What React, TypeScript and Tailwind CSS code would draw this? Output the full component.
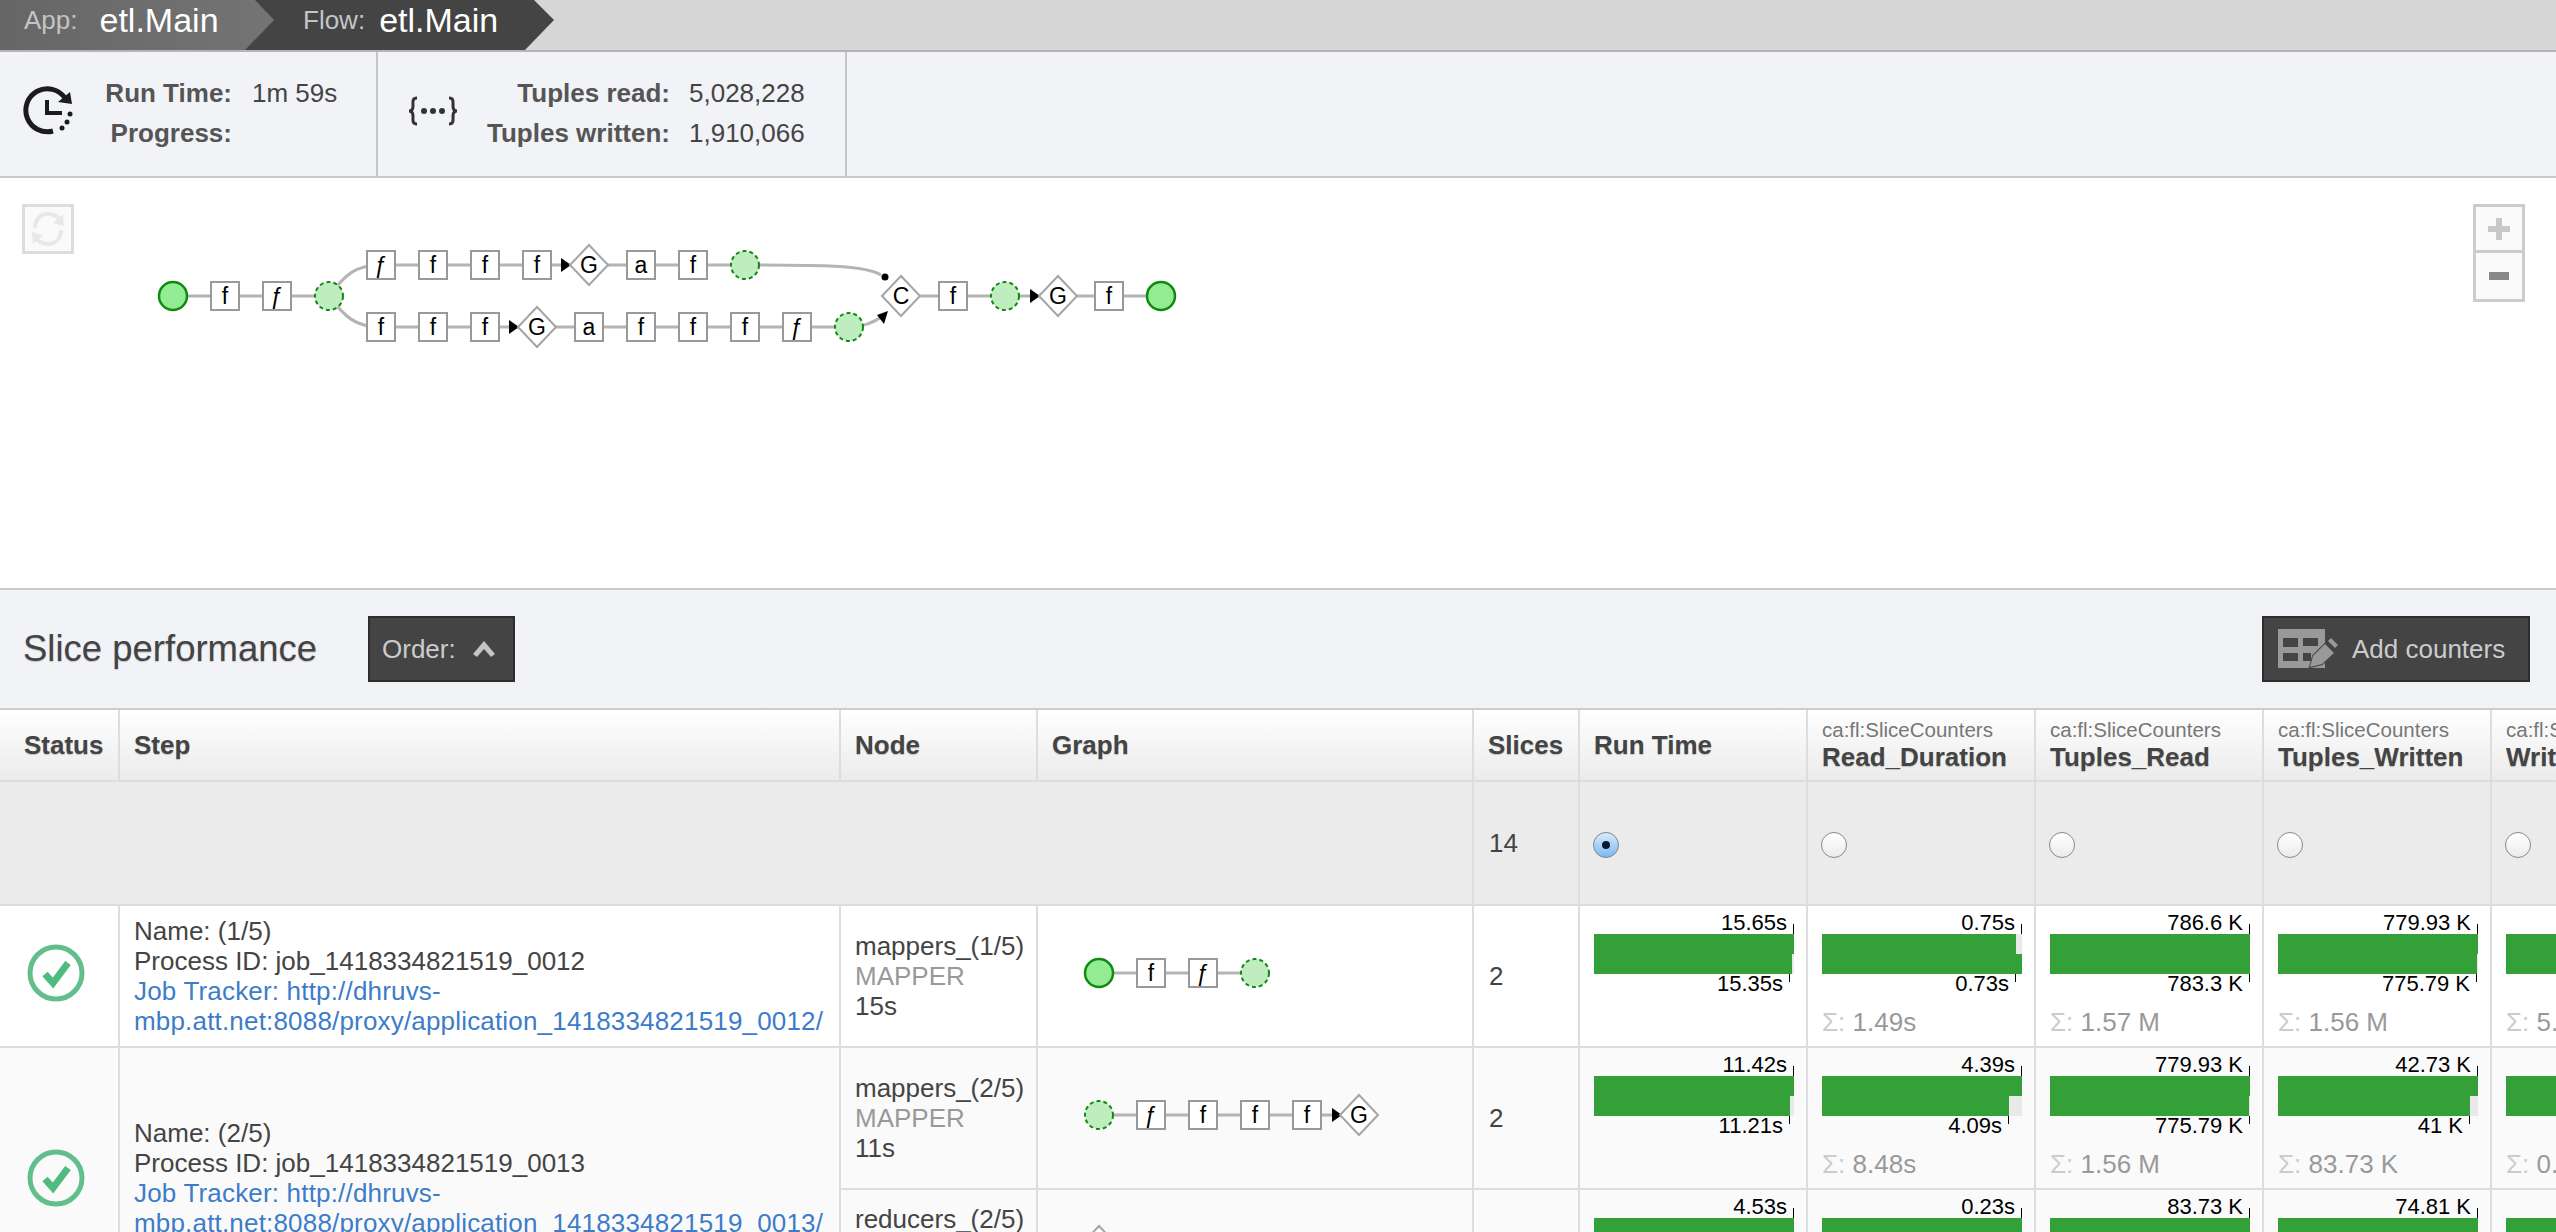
import React from 'react';

const LINE = '#b4b4b4';

function Box({ x, y, label }: { x: number; y: number; label: string }) {
  return (
    <g>
      <rect x={x - 14} y={y - 14} width={28} height={28} fill="#fff" stroke="#999" strokeWidth={2} />
      <text x={x} y={y + 8} textAnchor="middle" fontSize={23} fill="#000">{label}</text>
    </g>
  );
}

function Diamond({ x, y, label }: { x: number; y: number; label: string }) {
  return (
    <g>
      <polygon points={`${x - 19},${y} ${x},${y - 20} ${x + 19},${y} ${x},${y + 20}`} fill="#fff" stroke="#a5a5a5" strokeWidth={2} />
      <text x={x} y={y + 8} textAnchor="middle" fontSize={23} fill="#000">{label}</text>
    </g>
  );
}

function Dot({ x, y, dashed }: { x: number; y: number; dashed?: boolean }) {
  return dashed ? (
    <circle cx={x} cy={y} r={14} fill="#c0edc0" stroke="#108a10" strokeWidth={2} strokeDasharray="4 3" />
  ) : (
    <circle cx={x} cy={y} r={14} fill="#93ec93" stroke="#108a10" strokeWidth={2.5} />
  );
}

function Arrow({ x, y }: { x: number; y: number }) {
  return <polygon points={`${x - 8},${y - 7} ${x + 2},${y} ${x - 8},${y + 7}`} fill="#000" />;
}

function FlowGraph() {
  return (
    <svg width={1200} height={200} viewBox="0 178 1200 200" className="block" style={{ fontFamily: 'Liberation Sans, sans-serif' }}>
      <g fill="none" stroke={LINE} strokeWidth={3}>
        <path d="M173 296H329" />
        <path d="M901 296H1161" />
        <path d="M329 296C345 275 355 265 381 265H745C820 265 865 265 881 275" />
        <path d="M329 296C345 317 355 327 381 327H849C865 327 875 322 884 315" />
      </g>
      <Dot x={173} y={296} />
      <Box x={225} y={296} label="f" />
      <Box x={277} y={296} label="ƒ" />
      <Dot x={329} y={296} dashed />
      <Box x={381} y={265} label="ƒ" />
      <Box x={433} y={265} label="f" />
      <Box x={485} y={265} label="f" />
      <Box x={537} y={265} label="f" />
      <Arrow x={569} y={265} />
      <Diamond x={589} y={265} label="G" />
      <Box x={641} y={265} label="a" />
      <Box x={693} y={265} label="f" />
      <Dot x={745} y={265} dashed />
      <Box x={381} y={327} label="f" />
      <Box x={433} y={327} label="f" />
      <Box x={485} y={327} label="f" />
      <Arrow x={517} y={327} />
      <Diamond x={537} y={327} label="G" />
      <Box x={589} y={327} label="a" />
      <Box x={641} y={327} label="f" />
      <Box x={693} y={327} label="f" />
      <Box x={745} y={327} label="f" />
      <Box x={797} y={327} label="ƒ" />
      <Dot x={849} y={327} dashed />
      <circle cx={885} cy={277} r={3.5} fill="#000" />
      <polygon points="888,311 884,324 877,315" fill="#000" />
      <Diamond x={901} y={296} label="C" />
      <Box x={953} y={296} label="f" />
      <Dot x={1005} y={296} dashed />
      <Arrow x={1038} y={296} />
      <Diamond x={1058} y={296} label="G" />
      <Box x={1109} y={296} label="f" />
      <Dot x={1161} y={296} />
    </svg>
  );
}

function MiniGraph({ children }: { children: React.ReactNode }) {
  return (
    <svg width={434} height={60} viewBox="1038 -30 434 60" className="block" style={{ fontFamily: 'Liberation Sans, sans-serif' }}>
      {children}
    </svg>
  );
}

function ClockIcon() {
  return (
    <svg width={52} height={52} viewBox="0 0 52 52" fill="none" stroke="#1c1c1c" strokeWidth={5} className="shrink-0 mb-1">
      <path d="M43 13A21.5 21.5 0 1 0 31 46" />
      <polygon points="48,7 50,19 36,17" fill="#1c1c1c" stroke="none" />
      <path d="M25 15V28H40" strokeWidth={4} />
      <circle cx={40} cy={43} r={2.5} fill="#1c1c1c" stroke="none" />
      <circle cx={45} cy={37} r={2.5} fill="#1c1c1c" stroke="none" />
      <circle cx={48} cy={29} r={2.5} fill="#1c1c1c" stroke="none" />
    </svg>
  );
}

function BracesIcon() {
  return (
    <svg width={50} height={30} viewBox="0 0 50 30" fill="none" stroke="#333" strokeWidth={3} className="shrink-0 mb-1">
      <path d="M9 2C4 2 5 6 5 10C5 13 4 15 1 15C4 15 5 17 5 20C5 24 4 28 9 28" />
      <path d="M41 2C46 2 45 6 45 10C45 13 46 15 49 15C46 15 45 17 45 20C45 24 46 28 41 28" />
      <circle cx={16} cy={15} r={3} fill="#333" stroke="none" />
      <circle cx={25} cy={15} r={3} fill="#333" stroke="none" />
      <circle cx={34} cy={15} r={3} fill="#333" stroke="none" />
    </svg>
  );
}

function CheckIcon() {
  return (
    <svg width={58} height={58} viewBox="0 0 58 58" fill="none">
      <circle cx={29} cy={29} r={26} stroke="#62bf8c" strokeWidth={5} />
      <path d="M18 30L26 39L41 19" stroke="#4fbb80" strokeWidth={7} />
    </svg>
  );
}

function TableEditIcon() {
  return (
    <svg width={62} height={40} viewBox="0 0 62 40" className="shrink-0">
      <path
        d="M0 0H47V39H0Z M5 9V18H20V9Z M25 9V17H40V9Z M5 24V32H20V24Z M25 24V32H33V24Z"
        fill="#999999"
        fillRule="evenodd"
      />
      <path d="M32 38L35 27L47 15L56 24L44 35Z" fill="#999999" stroke="#444444" strokeWidth={2} paintOrder="stroke" />
      <path d="M50 12L53 9L60 16L57 19Z" fill="#999999" />
    </svg>
  );
}

function Radio({ on }: { on?: boolean }) {
  return on ? (
    <div className="w-[26px] h-[26px] rounded-full border border-[#7c8794] bg-gradient-to-b from-[#dbeafb] to-[#7db8f0] flex items-center justify-center mt-1">
      <div className="w-2 h-2 rounded-full bg-[#0b1a33]" />
    </div>
  ) : (
    <div className="w-[26px] h-[26px] rounded-full border border-[#8a8a8a] bg-gradient-to-b from-white to-[#ececec] mt-1" />
  );
}

type Metric = {
  top: string;
  bottom: string;
  topBar: number;
  botBar: number;
  topTick: number;
  botTick: number;
  sum?: string;
};

function MetricCell({ m, bg }: { m: Metric; bg: string }) {
  return (
    <div className={`${bg} border-r-2 border-b-2 border-[#dddddd] pl-[14px] pt-2 overflow-hidden`}>
      <div className="w-[200px]">
        <div className="h-5 flex justify-end items-end text-[22px] leading-[22px] text-black" style={{ width: `${m.topTick}%` }}>
          <span className="whitespace-nowrap mr-[6px]">{m.top}</span>
          <div className="w-px h-[10px] shrink-0 bg-black" />
        </div>
        <div className="bg-[#e9e9e9]">
          <div className="h-5 bg-[#34a038]" style={{ width: `${m.topBar}%` }} />
          <div className="h-5 bg-[#34a038]" style={{ width: `${m.botBar}%` }} />
        </div>
        <div className="h-5 flex justify-end items-start text-[22px] leading-5 text-black" style={{ width: `${m.botTick}%` }}>
          <span className="whitespace-nowrap mr-[6px]">{m.bottom}</span>
          <div className="w-px h-2 shrink-0 bg-black" />
        </div>
      </div>
      {m.sum && (
        <div className="mt-[14px] text-[26px] leading-[28px] text-[#999999] whitespace-nowrap">
          <span className="text-[#cccccc]">Σ: </span>{m.sum}
        </div>
      )}
    </div>
  );
}

function HeaderCell({ title, sub, first }: { title: string; sub?: string; first?: boolean }) {
  return (
    <div className={`bg-gradient-to-b from-white to-[#ebebeb] border-r-2 border-b-2 border-[#dddddd] ${first ? 'pl-6' : 'pl-[14px]'} flex flex-col justify-center overflow-hidden whitespace-nowrap`}>
      {sub && <div className="text-[20.5px] leading-6 text-[#777777]">{sub}</div>}
      <div className="text-[26px] leading-[30px] font-bold text-[#444444] [text-shadow:0_1px_1px_rgba(0,0,0,0.2)]">{title}</div>
    </div>
  );
}

function StepCell({ n, id, bg, span }: { n: string; id: string; bg: string; span?: boolean }) {
  return (
    <div className={`${bg} ${span ? 'row-span-2' : ''} border-r-2 border-b-2 border-[#dddddd] pl-[14px] flex flex-col justify-center text-[26px] leading-[30px] text-[#444444]`}>
      <div>Name: ({n})</div>
      <div>Process ID: job_1418334821519_{id}</div>
      <div className="text-[#3d7cc9] tracking-[0.18px]">Job Tracker: http://dhruvs-mbp.att.net:8088/proxy/application_1418334821519_{id}/</div>
    </div>
  );
}

function NodeCell({ name, kind, time, bg }: { name: string; kind: string; time: string; bg: string }) {
  return (
    <div className={`${bg} border-r-2 border-b-2 border-[#dddddd] pl-[14px] flex flex-col justify-center text-[26px] leading-[30px] text-[#444444] whitespace-nowrap`}>
      <div>{name}</div>
      <div className="text-[#999999]">{kind}</div>
      <div>{time}</div>
    </div>
  );
}

const blank: Metric = { top: '', bottom: '', topBar: 100, botBar: 100, topTick: 100, botTick: 100 };

const rowOne: Metric[] = [
  { top: '15.65s', bottom: '15.35s', topBar: 100, botBar: 99, topTick: 100, botTick: 98 },
  { top: '0.75s', bottom: '0.73s', topBar: 97, botBar: 100, topTick: 100, botTick: 97, sum: '1.49s' },
  { top: '786.6 K', bottom: '783.3 K', topBar: 100, botBar: 100, topTick: 100, botTick: 100, sum: '1.57 M' },
  { top: '779.93 K', bottom: '775.79 K', topBar: 100, botBar: 99.5, topTick: 100, botTick: 99.5, sum: '1.56 M' },
  { ...blank, sum: '5.52s' },
];

const rowTwo: Metric[] = [
  { top: '11.42s', bottom: '11.21s', topBar: 100, botBar: 98, topTick: 100, botTick: 98 },
  { top: '4.39s', bottom: '4.09s', topBar: 100, botBar: 93.5, topTick: 100, botTick: 93.5, sum: '8.48s' },
  { top: '779.93 K', bottom: '775.79 K', topBar: 100, botBar: 99.5, topTick: 100, botTick: 100, sum: '1.56 M' },
  { top: '42.73 K', bottom: '41 K', topBar: 100, botBar: 96, topTick: 100, botTick: 96, sum: '83.73 K' },
  { ...blank, sum: '0.52s' },
];

const rowThree: Metric[] = [
  { ...blank, top: '4.53s' },
  { ...blank, top: '0.23s' },
  { ...blank, top: '83.73 K' },
  { ...blank, top: '74.81 K' },
  blank,
];

export default function App() {
  return (
    <div className="w-[2556px] h-[1232px] overflow-hidden bg-white [font-family:'Liberation_Sans',sans-serif]">
      {/* Breadcrumb */}
      <div className="h-[52px] bg-[#d6d6d6] border-b-2 border-[#b5b5b5] flex">
        <div className="relative z-10 w-[274px] h-[50px] pl-6 pb-[10px] flex items-center gap-[22px] bg-gradient-to-r from-[#666666] to-[#747474] [clip-path:polygon(0_0,255px_0,274px_20px,245px_50px,0_50px)]">
          <span className="text-[26px] text-[#c4c4c4]">App:</span>
          <span className="text-[34px] text-white">etl.Main</span>
        </div>
        <div className="-ml-[29px] w-[309px] h-[50px] pl-[58px] pb-[10px] flex items-center gap-[14px] bg-[#444444] [clip-path:polygon(0_0,289px_0,309px_20px,280px_50px,0_50px)]">
          <span className="text-[26px] text-[#c4c4c4]">Flow:</span>
          <span className="text-[34px] text-white">etl.Main</span>
        </div>
      </div>

      {/* Stats */}
      <div className="h-[126px] bg-[#f1f3f7] border-b-2 border-[#c8c8c8] flex text-[26px] leading-10">
        <div className="w-[378px] border-r-2 border-[#c4c4c4] flex items-center pl-[22px] pb-[2px]">
          <ClockIcon />
          <div className="grid grid-cols-[158px_auto] gap-x-[20px] justify-start">
            <div className="text-right font-bold text-[#555555]">Run Time:</div>
            <div className="text-[#444444]">1m 59s</div>
            <div className="text-right font-bold text-[#555555]">Progress:</div>
            <div />
          </div>
        </div>
        <div className="w-[469px] border-r-2 border-[#c4c4c4] flex items-center pl-[30px] pb-[2px]">
          <BracesIcon />
          <div className="grid grid-cols-[212px_auto] gap-x-[19px] justify-start">
            <div className="text-right font-bold text-[#555555]">Tuples read:</div>
            <div className="text-[#444444]">5,028,228</div>
            <div className="text-right font-bold text-[#555555]">Tuples written:</div>
            <div className="text-[#444444]">1,910,066</div>
          </div>
        </div>
      </div>

      {/* Flow graph */}
      <div className="relative h-[412px] border-b-2 border-[#cccccc]">
        <FlowGraph />
        <div className="absolute left-[22px] top-[26px] w-[52px] h-[50px] border-[3px] border-[#dddddd] bg-[#fafafa] flex items-center justify-center">
          <svg width={36} height={40} viewBox="0 0 36 40" fill="none" stroke="#e8e8e8" strokeWidth={4}>
            <path d="M5 19C5 10 11 5 18 5C24 5 29 8 31 13" />
            <path d="M31 21C31 30 25 35 18 35C12 35 7 32 5 27" />
            <polygon points="33,5 34,17 23,14" fill="#e8e8e8" stroke="none" />
            <polygon points="3,35 2,23 13,26" fill="#e8e8e8" stroke="none" />
          </svg>
        </div>
        <div className="absolute left-[2473px] top-[26px] w-[52px] border-[3px] border-[#cccccc] bg-[#fafafa]">
          <div className="h-[46px] border-b-[3px] border-[#cccccc] flex items-center justify-center">
            <svg width={24} height={24} viewBox="0 0 24 24" fill="#c8c8c8">
              <path d="M9 1H15V9H23V15H15V23H9V15H1V9H9Z" />
            </svg>
          </div>
          <div className="h-[46px] flex items-center justify-center">
            <svg width={20} height={8} viewBox="0 0 20 8" fill="#888888">
              <rect width={20} height={8} />
            </svg>
          </div>
        </div>
      </div>

      {/* Slice performance */}
      <div className="h-[120px] bg-[#f1f3f7] border-b-2 border-[#cccccc] flex items-center pl-[23px] pr-[26px]">
        <div className="w-[345px] text-[36.5px] text-[#444444] [text-shadow:0_1px_1px_rgba(0,0,0,0.2)]">Slice performance</div>
        <div className="w-[147px] h-[66px] bg-[#444444] border-2 border-[#2d2d2d] flex items-center pl-[12px] gap-[16px]">
          <span className="text-[26px] text-[#cccccc]">Order:</span>
          <svg width={24} height={18} viewBox="0 0 24 18" fill="#c4c4c4">
            <path d="M12 1L23 14L19 17L12 9L5 17L1 14Z" />
          </svg>
        </div>
        <div className="ml-auto w-[268px] h-[66px] bg-[#444444] border-2 border-[#2d2d2d] flex items-center pl-[14px] gap-[12px]">
          <TableEditIcon />
          <span className="text-[26px] text-[#cccccc] whitespace-nowrap">Add counters</span>
        </div>
      </div>

      {/* Steps table */}
      <div className="grid grid-cols-[120px_721px_197px_436px_106px_228px_228px_228px_228px_228px] grid-rows-[72px_124px_142px_142px_120px]">
        <HeaderCell title="Status" first />
        <HeaderCell title="Step" />
        <HeaderCell title="Node" />
        <HeaderCell title="Graph" />
        <HeaderCell title="Slices" />
        <HeaderCell title="Run Time" />
        <HeaderCell title="Read_Duration" sub="ca:fl:SliceCounters" />
        <HeaderCell title="Tuples_Read" sub="ca:fl:SliceCounters" />
        <HeaderCell title="Tuples_Written" sub="ca:fl:SliceCounters" />
        <HeaderCell title="Write_Duration" sub="ca:fl:SliceCounters" />

        {/* Totals */}
        <div className="col-span-4 bg-[#ebebeb] border-r-2 border-b-2 border-[#dddddd]" />
        <div className="bg-[#ebebeb] border-r-2 border-b-2 border-[#dddddd] pl-[15px] flex items-center text-[26px] text-[#444444]">14</div>
        {[true, false, false, false, false].map((on, i) => (
          <div key={i} className="bg-[#ebebeb] border-r-2 border-b-2 border-[#dddddd] pl-[13px] flex items-center">
            <Radio on={on} />
          </div>
        ))}

        {/* Step 1/5 */}
        <div className="bg-white border-r-2 border-b-2 border-[#dddddd] flex items-center justify-center pb-[6px] pr-[6px]">
          <CheckIcon />
        </div>
        <StepCell n="1/5" id="0012" bg="bg-white" />
        <NodeCell name="mappers_(1/5)" kind="MAPPER" time="15s" bg="bg-white" />
        <div className="bg-white border-r-2 border-b-2 border-[#dddddd] flex items-center pb-[6px]">
          <MiniGraph>
            <path d="M1099 0H1255" stroke={LINE} strokeWidth={3} />
            <Dot x={1099} y={0} />
            <Box x={1151} y={0} label="f" />
            <Box x={1203} y={0} label="ƒ" />
            <Dot x={1255} y={0} dashed />
          </MiniGraph>
        </div>
        <div className="bg-white border-r-2 border-b-2 border-[#dddddd] pl-[15px] flex items-center text-[26px] text-[#444444]">2</div>
        {rowOne.map((m, i) => (
          <MetricCell key={i} m={m} bg="bg-white" />
        ))}

        {/* Step 2/5 */}
        <div className="row-span-2 bg-[#fafafa] border-r-2 border-b-2 border-[#dddddd] flex items-center justify-center pr-[6px]">
          <CheckIcon />
        </div>
        <StepCell n="2/5" id="0013" bg="bg-[#fafafa]" span />
        <NodeCell name="mappers_(2/5)" kind="MAPPER" time="11s" bg="bg-[#fafafa]" />
        <div className="bg-[#fafafa] border-r-2 border-b-2 border-[#dddddd] flex items-center pb-[6px]">
          <MiniGraph>
            <path d="M1099 0H1340" stroke={LINE} strokeWidth={3} />
            <Dot x={1099} y={0} dashed />
            <Box x={1151} y={0} label="ƒ" />
            <Box x={1203} y={0} label="f" />
            <Box x={1255} y={0} label="f" />
            <Box x={1307} y={0} label="f" />
            <Arrow x={1340} y={0} />
            <Diamond x={1359} y={0} label="G" />
          </MiniGraph>
        </div>
        <div className="bg-[#fafafa] border-r-2 border-b-2 border-[#dddddd] pl-[15px] flex items-center text-[26px] text-[#444444]">2</div>
        {rowTwo.map((m, i) => (
          <MetricCell key={i} m={m} bg="bg-[#fafafa]" />
        ))}

        <NodeCell name="reducers_(2/5)" kind="REDUCER" time="4s" bg="bg-[#fafafa]" />
        <div className="bg-[#fafafa] border-r-2 border-b-2 border-[#dddddd] flex items-center pb-[6px]">
          <MiniGraph>
            <Diamond x={1099} y={0} label="G" />
          </MiniGraph>
        </div>
        <div className="bg-[#fafafa] border-r-2 border-b-2 border-[#dddddd] pl-[15px] flex items-center text-[26px] text-[#444444]">2</div>
        {rowThree.map((m, i) => (
          <MetricCell key={i} m={m} bg="bg-[#fafafa]" />
        ))}
      </div>
    </div>
  );
}
